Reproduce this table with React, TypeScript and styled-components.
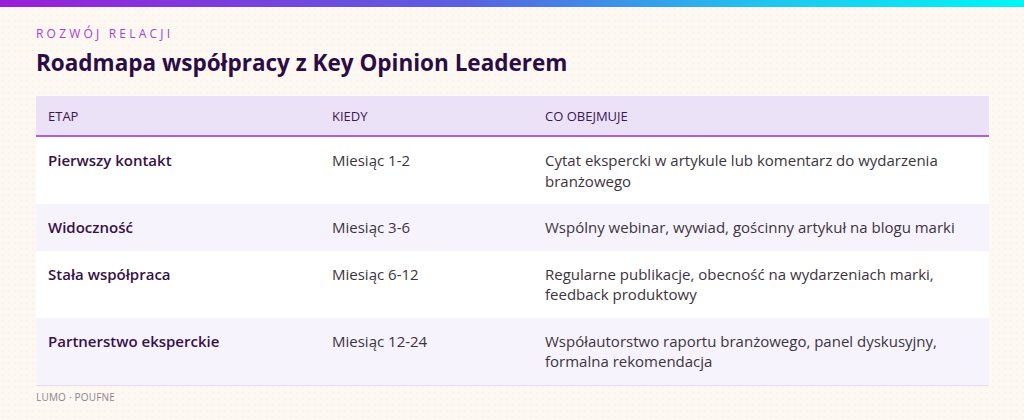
import React from "react";
import styled, { createGlobalStyle } from "styled-components";

const Global = createGlobalStyle`
  html, body { margin: 0; padding: 0; }
  body {
    background: #fdf8f2;
    font-family: "Open Sans", "Noto Sans", sans-serif;
    width: 1024px;
    height: 420px;
    overflow: hidden;
  }
`;

const Page = styled.div`
  width: 1024px;
  height: 420px;
  display: flex;
  flex-direction: column;
  background-color: #fdf8f2;
  background-image: radial-gradient(rgba(180, 150, 120, 0.045) 1px, transparent 1px);
  background-size: 6px 6px;
`;

const TopBar = styled.div`
  height: 7px;
  background: linear-gradient(90deg, #9a1ed8 0%, #5a5fe0 45%, #1fc6f0 75%, #00f6f4 100%);
`;

const Content = styled.div`
  padding: 19px 35px 0 36px;
  display: flex;
  flex-direction: column;
`;

const Eyebrow = styled.div`
  font-size: 12px;
  letter-spacing: 3.2px;
  color: #a43fd4;
  font-weight: 500;
  line-height: 16px;
`;

const Title = styled.h1`
  margin: 6px 0 0;
  font-size: 22.5px;
  font-weight: 700;
  color: #2b0c45;
  line-height: 30px;
`;

const Table = styled.table`
  margin-top: 18px;
  width: 953px;
  border-collapse: collapse;
  table-layout: fixed;
  border-bottom: 1px solid #e6dcf4;
`;

const HeadCell = styled.th<{ $w: number }>`
  box-sizing: border-box;
  width: ${(p) => p.$w}px;
  background: #ebe2f7;
  text-align: left;
  font-weight: 500;
  font-size: 13px;
  color: #3c1656;
  padding: 11px 12px 10px;
  line-height: 18px;
  border-bottom: 2px solid #b85dd9;
`;

const Row = styled.tr<{ $alt: boolean }>`
  background: ${(p) => (p.$alt ? "#f7f3fd" : "#ffffff")};
`;

const Cell = styled.td<{ $strong?: boolean }>`
  box-sizing: border-box;
  vertical-align: top;
  padding: 13px 12px 13px;
  font-size: 15px;
  line-height: 20.5px;
  color: ${(p) => (p.$strong ? "#361148" : "#3c3340")};
  font-weight: ${(p) => (p.$strong ? 550 : 400)};
`;

const Footer = styled.div`
  margin-top: 4px;
  font-size: 10px;
  line-height: 14px;
  color: #8b8590;
  letter-spacing: 0.2px;
`;

const rows = [
  ["Pierwszy kontakt", "Miesiąc 1-2", "Cytat ekspercki w artykule lub komentarz do wydarzenia branżowego"],
  ["Widoczność", "Miesiąc 3-6", "Wspólny webinar, wywiad, gościnny artykuł na blogu marki"],
  ["Stała współpraca", "Miesiąc 6-12", "Regularne publikacje, obecność na wydarzeniach marki, feedback produktowy"],
  ["Partnerstwo eksperckie", "Miesiąc 12-24", "Współautorstwo raportu branżowego, panel dyskusyjny, formalna rekomendacja"],
];

export default function App() {
  return (
    <>
      <Global />
      <Page>
        <TopBar />
        <Content>
          <Eyebrow>ROZWÓJ RELACJI</Eyebrow>
          <Title>Roadmapa współpracy z Key Opinion Leaderem</Title>
          <Table>
            <thead>
              <tr>
                <HeadCell $w={284}>ETAP</HeadCell>
                <HeadCell $w={213}>KIEDY</HeadCell>
                <HeadCell $w={456}>CO OBEJMUJE</HeadCell>
              </tr>
            </thead>
            <tbody>
              {rows.map((r, i) => (
                <Row key={i} $alt={i % 2 === 1}>
                  <Cell $strong>{r[0]}</Cell>
                  <Cell>{r[1]}</Cell>
                  <Cell>{r[2]}</Cell>
                </Row>
              ))}
            </tbody>
          </Table>
          <Footer>LUMO · POUFNE</Footer>
        </Content>
      </Page>
    </>
  );
}
